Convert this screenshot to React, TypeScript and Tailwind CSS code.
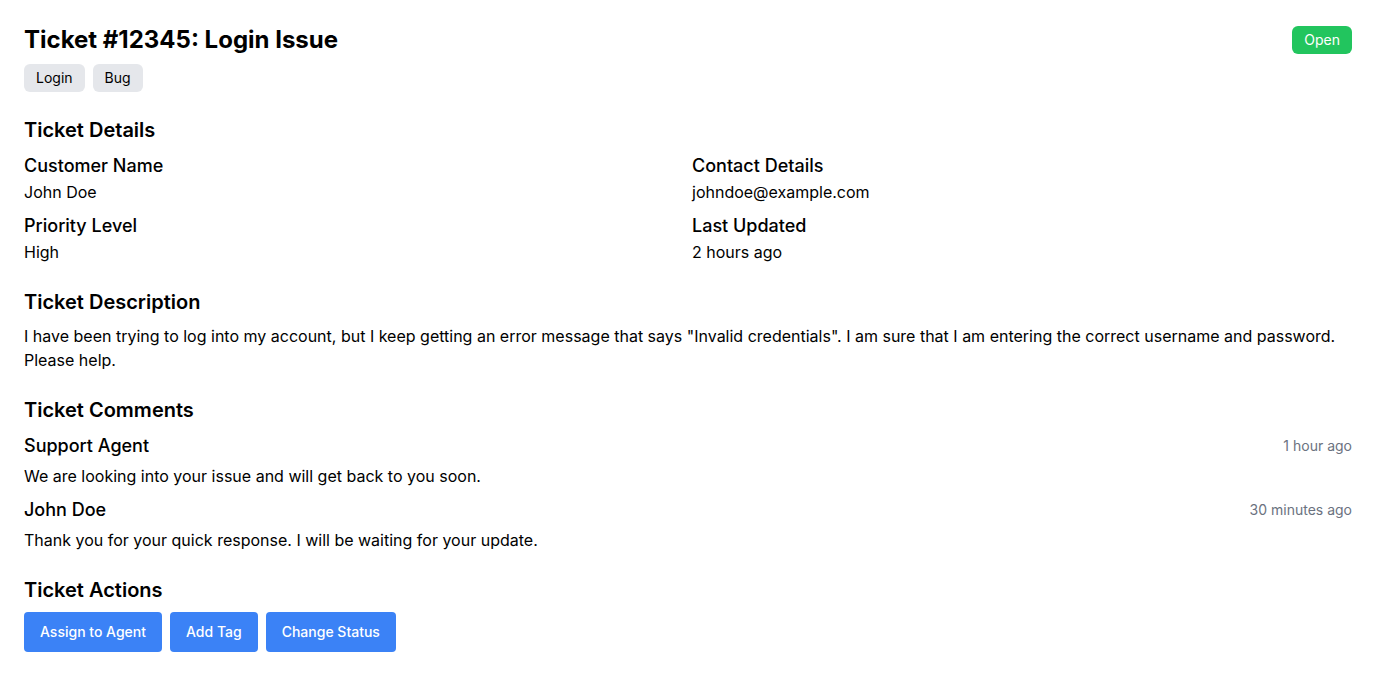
import React from 'react';

interface Comment {
  author: string;
  time: string;
  text: string;
}

const COMMENTS: Comment[] = [
  { author: 'Support Agent', time: '1 hour ago', text: 'We are looking into your issue and will get back to you soon.' },
  { author: 'John Doe', time: '30 minutes ago', text: 'Thank you for your quick response. I will be waiting for your update.' },
];

const DETAILS = [
  { label: 'Customer Name', value: 'John Doe' },
  { label: 'Contact Details', value: 'johndoe@example.com' },
  { label: 'Priority Level', value: 'High' },
  { label: 'Last Updated', value: '2 hours ago' },
];

const ACTIONS = ['Assign to Agent', 'Add Tag', 'Change Status'];

export default function App() {
  return (
    <div className="p-6 bg-white text-black min-h-screen" style={{ fontFamily: 'Inter, "Noto Sans", sans-serif' }}>
      <div className="flex items-start justify-between">
        <div>
          <h1 className="text-2xl font-bold">Ticket #12345: Login Issue</h1>
          <div className="flex gap-2 mt-2">
            <span className="bg-[#e5e7eb] rounded-md px-3 py-1 text-sm">Login</span>
            <span className="bg-[#e5e7eb] rounded-md px-3 py-1 text-sm">Bug</span>
          </div>
        </div>
        <span className="mt-0.5 bg-[#22c55e] text-white rounded-md px-3 py-1 text-sm">Open</span>
      </div>

      <section className="mt-6">
        <h2 className="text-xl font-semibold mb-2">Ticket Details</h2>
        <div className="grid grid-cols-2 gap-2">
          {DETAILS.map((d) => (
            <div key={d.label}>
              <h3 className="text-lg font-medium">{d.label}</h3>
              <p>{d.value}</p>
            </div>
          ))}
        </div>
      </section>

      <section className="mt-6">
        <h2 className="text-xl font-semibold mb-2">Ticket Description</h2>
        <p>
          I have been trying to log into my account, but I keep getting an error message that says "Invalid credentials". I am sure that I am entering the correct username and password. Please help.
        </p>
      </section>

      <section className="mt-6">
        <h2 className="text-xl font-semibold mb-2">Ticket Comments</h2>
        <div className="space-y-2">
          {COMMENTS.map((c) => (
            <div key={c.author}>
              <div className="flex items-center justify-between">
                <h3 className="text-lg font-medium">{c.author}</h3>
                <span className="text-sm text-[#6b7280]">{c.time}</span>
              </div>
              <p className="mt-1">{c.text}</p>
            </div>
          ))}
        </div>
      </section>

      <section className="mt-6">
        <h2 className="text-xl font-semibold mb-2">Ticket Actions</h2>
        <div className="flex gap-2">
          {ACTIONS.map((a) => (
            <button key={a} className="bg-[#3b82f6] text-white text-sm font-medium rounded px-4 h-10">
              {a}
            </button>
          ))}
        </div>
      </section>
    </div>
  );
}
